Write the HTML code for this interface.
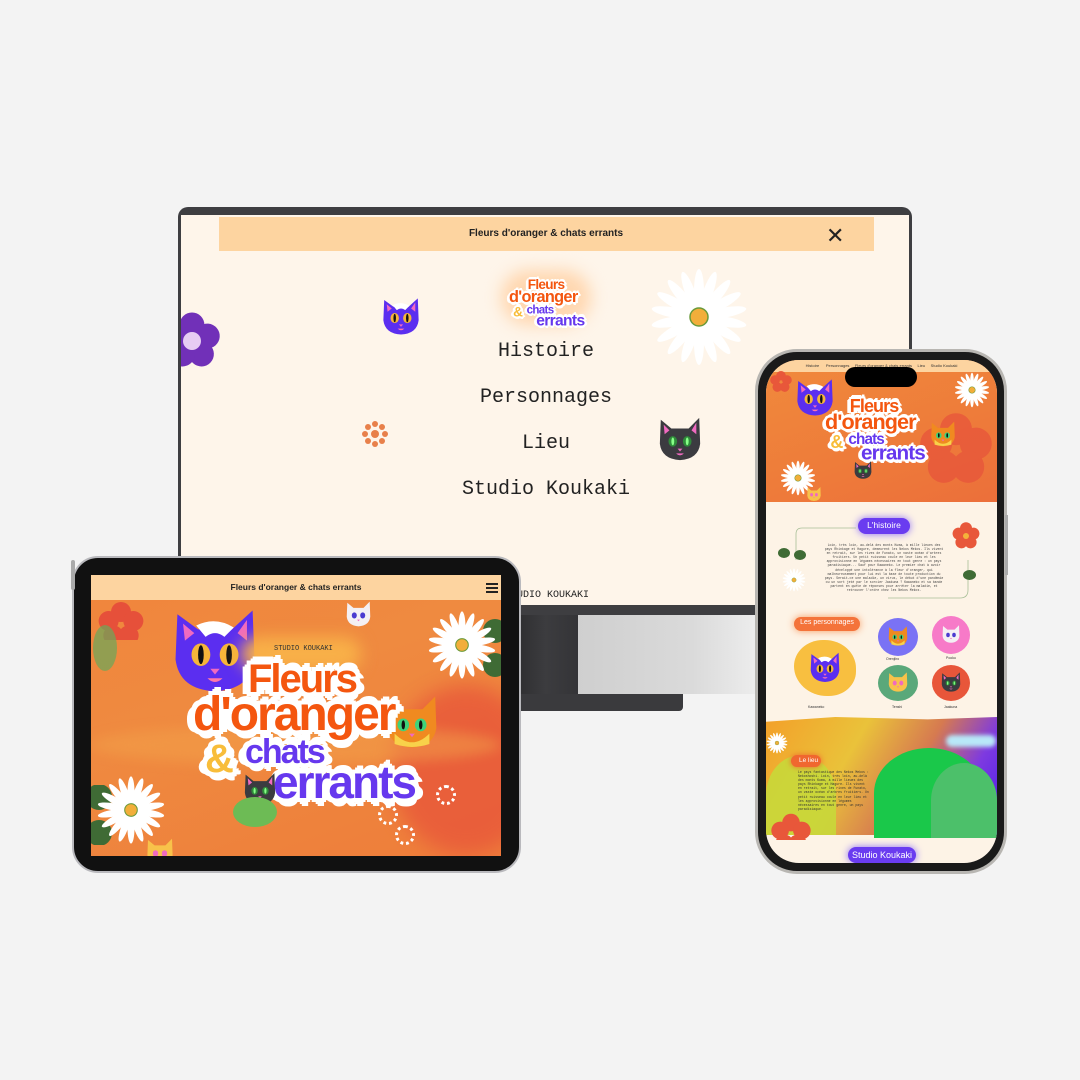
<!DOCTYPE html>
<html><head><meta charset="utf-8">
<style>
*{margin:0;padding:0;box-sizing:border-box}
body{width:1080px;height:1080px;background:#f3f3f3;position:relative;overflow:hidden;font-family:"Liberation Sans",sans-serif}
.a{position:absolute}
.mono{font-family:"Liberation Mono",monospace}
.logo{position:absolute;width:240px;height:150px;transform-origin:0 0}
.logo span{position:absolute;font-weight:bold;letter-spacing:-2px;white-space:nowrap;line-height:1;
text-shadow:6px 0 0 #fff,-6px 0 0 #fff,0 6px 0 #fff,0 -6px 0 #fff,4px 4px 0 #fff,-4px 4px 0 #fff,4px -4px 0 #fff,-4px -4px 0 #fff,8px 2px 0 #fff,-8px 2px 0 #fff,2px 8px 0 #fff,2px -8px 0 #fff}
.o{color:#f4560f}.p{color:#6638ee}.y{color:#f8bd3a}
</style></head><body>
<svg width="0" height="0" style="position:absolute">
<defs>
<symbol id="daisy" viewBox="-50 -50 100 100">
<g fill="#fff">
<ellipse rx="5" ry="22" cy="-26"/><ellipse rx="5" ry="22" cy="-26" transform="rotate(20)"/><ellipse rx="5" ry="22" cy="-26" transform="rotate(40)"/><ellipse rx="5" ry="22" cy="-26" transform="rotate(60)"/><ellipse rx="5" ry="22" cy="-26" transform="rotate(80)"/><ellipse rx="5" ry="22" cy="-26" transform="rotate(100)"/><ellipse rx="5" ry="22" cy="-26" transform="rotate(120)"/><ellipse rx="5" ry="22" cy="-26" transform="rotate(140)"/><ellipse rx="5" ry="22" cy="-26" transform="rotate(160)"/><ellipse rx="5" ry="22" cy="-26" transform="rotate(180)"/><ellipse rx="5" ry="22" cy="-26" transform="rotate(200)"/><ellipse rx="5" ry="22" cy="-26" transform="rotate(220)"/><ellipse rx="5" ry="22" cy="-26" transform="rotate(240)"/><ellipse rx="5" ry="22" cy="-26" transform="rotate(260)"/><ellipse rx="5" ry="22" cy="-26" transform="rotate(280)"/><ellipse rx="5" ry="22" cy="-26" transform="rotate(300)"/><ellipse rx="5" ry="22" cy="-26" transform="rotate(320)"/><ellipse rx="5" ry="22" cy="-26" transform="rotate(340)"/>
</g>
<circle r="9" fill="#f2ae3a" stroke="#6a9a3a" stroke-width="1.5"/>
</symbol>
<symbol id="catp" viewBox="0 0 100 100">
<path d="M10 12 L32 28 L68 28 L90 8 L92 60 Q88 92 50 94 Q12 92 8 60 Z" fill="#5b2ef0"/>
<path d="M16 22 L28 32 L18 40Z M84 18 L74 32 L84 40Z" fill="#f06ac0"/>
<path d="M30 24 Q50 14 70 26 L60 36 Q50 28 40 36Z" fill="#fff"/>
<ellipse cx="35" cy="55" rx="10" ry="12" fill="#f6b53a"/><ellipse cx="65" cy="55" rx="10" ry="12" fill="#f6b53a"/>
<ellipse cx="35" cy="55" rx="3" ry="10" fill="#111"/><ellipse cx="65" cy="55" rx="3" ry="10" fill="#111"/>
<path d="M45 70 L55 70 L50 76Z" fill="#f06ac0"/><path d="M42 80 Q50 88 58 80Z" fill="#f7a"/>
</symbol>
<symbol id="catd" viewBox="0 0 100 100">
<path d="M10 10 L32 28 L68 28 L90 6 L92 60 Q88 92 50 94 Q12 92 8 60 Z" fill="#3b3b40"/>
<path d="M16 20 L28 32 L18 40Z M84 16 L74 32 L84 40Z" fill="#f06ac0"/>
<ellipse cx="35" cy="55" rx="9" ry="11" fill="#2f8a3a"/><ellipse cx="65" cy="55" rx="9" ry="11" fill="#2f8a3a"/>
<ellipse cx="35" cy="55" rx="3" ry="8" fill="#8f8"/><ellipse cx="65" cy="55" rx="3" ry="8" fill="#8f8"/>
<path d="M45 70 L55 70 L50 76Z" fill="#f06ac0"/><path d="M42 80 Q50 88 58 80Z" fill="#f06ac0"/>
</symbol>
<symbol id="cato" viewBox="0 0 100 100">
<path d="M10 10 L32 28 L68 28 L90 6 L92 60 Q88 92 50 94 Q12 92 8 60 Z" fill="#f08a20"/>
<path d="M20 70 Q50 100 80 70 L80 88 Q50 98 20 88Z" fill="#f8d24a"/>
<ellipse cx="35" cy="55" rx="10" ry="11" fill="#3fd27a"/><ellipse cx="65" cy="55" rx="10" ry="11" fill="#3fd27a"/>
<ellipse cx="35" cy="55" rx="3" ry="8" fill="#111"/><ellipse cx="65" cy="55" rx="3" ry="8" fill="#111"/>
<path d="M45 70 L55 70 L50 76Z" fill="#f06ac0"/>
</symbol>
<symbol id="catw" viewBox="0 0 100 100">
<path d="M10 10 L32 28 L68 28 L90 6 L92 60 Q88 92 50 94 Q12 92 8 60 Z" fill="#f4f0f4"/>
<ellipse cx="35" cy="55" rx="9" ry="11" fill="#4b3bd0"/><ellipse cx="65" cy="55" rx="9" ry="11" fill="#4b3bd0"/>
<path d="M45 70 L55 70 L50 76Z" fill="#f06ac0"/>
</symbol>
<symbol id="caty" viewBox="0 0 100 100">
<path d="M10 10 L32 28 L68 28 L90 6 L92 60 Q88 92 50 94 Q12 92 8 60 Z" fill="#f8c24a"/>
<ellipse cx="35" cy="55" rx="9" ry="11" fill="#f06ac0"/><ellipse cx="65" cy="55" rx="9" ry="11" fill="#f06ac0"/>
<path d="M45 70 L55 70 L50 76Z" fill="#f06ac0"/>
</symbol>
<symbol id="flower" viewBox="-50 -50 100 100">
<g><circle cy="-26" r="20"/><circle cy="-26" r="20" transform="rotate(72)"/><circle cy="-26" r="20" transform="rotate(144)"/><circle cy="-26" r="20" transform="rotate(216)"/><circle cy="-26" r="20" transform="rotate(288)"/></g>
</symbol>
</defs></svg>

<!-- MONITOR -->
<div class="a" style="left:578px;top:612px;width:190px;height:82px;background:linear-gradient(90deg,#cfcfcf,#dadada 60%,#f0f0f0)"></div>
<div class="a" style="left:513px;top:606px;width:65px;height:95px;background:linear-gradient(90deg,#2c2c2e,#3c3c3f 50%,#343437)"></div>
<div class="a" style="left:513px;top:694px;width:170px;height:17px;background:#3a3a3d;border-radius:0 0 4px 4px"></div>
<div class="a" style="left:178px;top:207px;width:734px;height:408px;background:#3e3e41;border-radius:10px 10px 0 0"></div>
<div class="a" style="left:181px;top:215px;width:728px;height:390px;background:#fef5ea;overflow:hidden">
  <div class="a" style="left:38px;top:2px;width:655px;height:34px;background:#fdd4a0"></div>
  <div class="a" style="left:0;top:13px;width:730px;text-align:center;font-size:10px;font-weight:bold;color:#222">Fleurs d'oranger &amp; chats errants</div>
  <div class="a" style="left:645px;top:12px;font-size:22px;line-height:18px;color:#222">&#x2715;</div>
  <svg class="a" style="left:-20px;top:88px" width="62" height="76"><use href="#flower" x="0" y="0" width="62" height="76" fill="#7130b8"/><circle cx="31" cy="38" r="9" fill="#e7ccf3"/></svg>
  <svg class="a" style="left:468px;top:52px" width="100" height="100"><use href="#daisy" width="100" height="100"/></svg>
  <svg class="a" style="left:196px;top:80px" width="48" height="42"><use href="#catp" width="48" height="42"/></svg>
  <svg class="a" style="left:472px;top:200px" width="54" height="48"><use href="#catd" width="54" height="48"/></svg>
  <svg class="a" style="left:177px;top:202px" width="34" height="34"><g fill="#e8804a"><circle cx="17" cy="17" r="4"/><circle cx="17" cy="7" r="3"/><circle cx="17" cy="27" r="3"/><circle cx="7" cy="17" r="3"/><circle cx="27" cy="17" r="3"/><circle cx="10" cy="10" r="3"/><circle cx="24" cy="10" r="3"/><circle cx="10" cy="24" r="3"/><circle cx="24" cy="24" r="3"/></g></svg>
  <div class="mono a" style="left:0;width:730px;top:114px;text-align:center;font-size:20px;line-height:46px;color:#222">Histoire<br>Personnages<br>Lieu<br>Studio Koukaki</div>
  <div class="mono a" style="left:336px;top:375px;font-size:10px;color:#222">UDIO KOUKAKI</div>
  <div class="a" style="left:320px;top:55px;width:90px;height:55px;border-radius:40px;background:#ffd7b0;filter:blur(8px)"></div>
  <div class="logo" style="left:328px;top:63px;transform:scale(.34)">
    <span class="o" style="left:55px;top:0;font-size:40px">Fleurs</span>
    <span class="o" style="left:0;top:32px;font-size:48px">d'oranger</span>
    <span class="y" style="left:12px;top:80px;font-size:40px">&amp;</span>
    <span class="p" style="left:52px;top:76px;font-size:34px">chats</span>
    <span class="p" style="left:80px;top:100px;font-size:46px">errants</span>
  </div>
</div>

<!-- TABLET -->
<div class="a" style="left:72px;top:556px;width:449px;height:317px;background:#111;border-radius:26px;border:2px solid #b9b9bd"></div>
<div class="a" style="left:71px;top:560px;width:4px;height:30px;background:#aaa;border-radius:2px"></div>
<div class="a" style="left:91px;top:575px;width:410px;height:281px;overflow:hidden;background:linear-gradient(160deg,#f0853c,#ef8a40 40%,#ee7d3a)">
  <div class="a" style="left:0;top:0;width:410px;height:25px;background:#fdd4a0;z-index:3"></div>
  <div class="a" style="left:0;top:7px;width:410px;text-align:center;font-size:8.5px;font-weight:bold;color:#222;z-index:4">Fleurs d'oranger &amp; chats errants</div>
  <div class="a" style="left:395px;top:8px;width:12px;height:2px;background:#222;box-shadow:0 4px 0 #222,0 8px 0 #222;z-index:4"></div>
  <div class="a" style="left:300px;top:110px;width:150px;height:170px;border-radius:50%;background:#e8573a;filter:blur(10px);opacity:.8"></div>
  <div class="a" style="left:0;top:150px;width:410px;height:40px;background:#f3a24a;opacity:.5;border-radius:50%;filter:blur(6px)"></div>
  <svg class="a" style="left:0;top:25px" width="60" height="40"><use href="#flower" width="60" height="50" fill="#e6503a"/></svg>
  <div class="a" style="left:2px;top:50px;width:24px;height:46px;border-radius:50%;background:#6aa85a;opacity:.7"></div>
  <svg class="a" style="left:70px;top:28px" width="108" height="94"><use href="#catp" width="108" height="94"/></svg>
  <svg class="a" style="left:250px;top:25px" width="35" height="28"><use href="#catw" width="35" height="28"/></svg>
  <div class="a" style="left:150px;top:62px;width:120px;height:34px;background:#f8b048;border-radius:20px;filter:blur(8px)"></div>
  <div class="mono a" style="left:183px;top:70px;font-size:7px;color:#333">STUDIO KOUKAKI</div>
  <svg class="a" style="left:384px;top:44px" width="30" height="60"><circle cx="20" cy="12" r="12" fill="#3f6b35"/><circle cx="20" cy="46" r="12" fill="#3f6b35"/></svg>
  <svg class="a" style="left:336px;top:35px" width="70" height="70"><use href="#daisy" width="70" height="70"/></svg>
  <svg class="a" style="left:286px;top:118px" width="70" height="58"><use href="#cato" width="70" height="58"/></svg>
  <div class="logo" style="left:102px;top:84px;transform:scale(1)">
    <span class="o" style="left:55px;top:0;font-size:40px">Fleurs</span>
    <span class="o" style="left:0;top:32px;font-size:48px">d'oranger</span>
    <span class="y" style="left:12px;top:80px;font-size:40px">&amp;</span>
    <span class="p" style="left:52px;top:76px;font-size:34px">chats</span>
    <span class="p" style="left:80px;top:100px;font-size:46px">errants</span>
  </div>
  <svg class="a" style="left:148px;top:196px" width="42" height="36"><use href="#catd" width="42" height="36"/></svg>
  <div class="a" style="left:142px;top:222px;width:44px;height:30px;border-radius:50%;background:#6dbb55"></div>
  <svg class="a" style="left:0;top:210px" width="30" height="60"><circle cx="8" cy="12" r="13" fill="#3f6b35"/><circle cx="8" cy="48" r="13" fill="#3f6b35"/></svg>
  <svg class="a" style="left:5px;top:200px" width="70" height="70"><use href="#daisy" width="70" height="70"/></svg>
  <svg class="a" style="left:50px;top:262px" width="38" height="30"><use href="#caty" width="38" height="30"/></svg>
  <div class="a" style="left:345px;top:210px;width:20px;height:20px;border-radius:50%;border:3px dotted #fff"></div>
  <div class="a" style="left:287px;top:230px;width:20px;height:20px;border-radius:50%;border:3px dotted #fff"></div>
  <div class="a" style="left:304px;top:250px;width:20px;height:20px;border-radius:50%;border:3px dotted #fff"></div>
</div>

<!-- PHONE -->
<div class="a" style="left:755px;top:349px;width:252px;height:525px;border-radius:42px;background:#1a1a1a;border:3px solid #b8b6b2"></div>
<div class="a" style="left:1005px;top:515px;width:3px;height:60px;background:#aaa"></div>
<div class="a" style="left:766px;top:360px;width:231px;height:503px;border-radius:33px;overflow:hidden;background:#fdf3e6">
  <div class="a" style="left:0;top:0;width:231px;height:142px;background:linear-gradient(160deg,#f08a3c,#ee7b3a 60%,#ec6f3a)"></div>
  <div class="a" style="left:0;top:0;width:231px;height:12px;background:#fdd4a0"></div>
  <div class="a" style="left:0;top:3px;width:231px;text-align:center;font-size:4px;color:#333">Histoire &nbsp;&nbsp;&nbsp;&nbsp; Personnages &nbsp;&nbsp;&nbsp; Fleurs d'oranger &amp; chats errants &nbsp;&nbsp;&nbsp; Lieu &nbsp;&nbsp;&nbsp; Studio Koukaki</div>
  <div class="a" style="left:79px;top:7px;width:72px;height:20px;border-radius:10px;background:#000"></div>
  <svg class="a" style="left:150px;top:40px" width="80" height="100"><use href="#flower" width="80" height="100" fill="#e8573a" opacity=".8"/></svg>
  <svg class="a" style="left:0;top:10px" width="30" height="24"><use href="#flower" width="30" height="24" fill="#e8573a"/></svg>
  <svg class="a" style="left:25px;top:16px" width="48" height="42"><use href="#catp" width="48" height="42"/></svg>
  <svg class="a" style="left:188px;top:12px" width="36" height="36"><use href="#daisy" width="36" height="36"/></svg>
  <svg class="a" style="left:160px;top:60px" width="34" height="28"><use href="#cato" width="34" height="28"/></svg>
  <div class="logo" style="left:59px;top:37px;transform:scale(.45)">
    <span class="o" style="left:55px;top:0;font-size:40px">Fleurs</span>
    <span class="o" style="left:0;top:32px;font-size:48px">d'oranger</span>
    <span class="y" style="left:12px;top:80px;font-size:40px">&amp;</span>
    <span class="p" style="left:52px;top:76px;font-size:34px">chats</span>
    <span class="p" style="left:80px;top:100px;font-size:46px">errants</span>
  </div>
  <svg class="a" style="left:86px;top:100px" width="22" height="20"><use href="#catd" width="22" height="20"/></svg>
  <svg class="a" style="left:14px;top:100px" width="36" height="36"><use href="#daisy" width="36" height="36"/></svg>
  <svg class="a" style="left:38px;top:126px" width="20" height="16"><use href="#caty" width="20" height="16"/></svg>
  <div class="a" style="left:92px;top:158px;width:52px;height:16px;border-radius:10px;background:#6a3cf0;box-shadow:0 0 8px #8a6cf8"></div>
  <div class="a" style="left:92px;top:160px;width:52px;text-align:center;font-size:8.5px;color:#fff">L'histoire</div>
  <svg class="a" style="left:12px;top:160px" width="215" height="90" fill="none" stroke="#a8bf98" stroke-width=".8"><path d="M78 8 H24 Q18 8 18 14 V40"/><path d="M190 40 V70 Q190 78 182 78 H110"/></svg>
  <div class="a" style="left:12px;top:188px;width:12px;height:10px;border-radius:50%;background:#3f6b35"></div>
  <div class="a" style="left:28px;top:190px;width:12px;height:10px;border-radius:50%;background:#3f6b35"></div>
  <svg class="a" style="left:16px;top:208px" width="24" height="24"><use href="#daisy" width="24" height="24"/></svg>
  <svg class="a" style="left:185px;top:160px" width="30" height="32"><use href="#flower" width="30" height="32" fill="#e8573a"/><circle cx="15" cy="16" r="3" fill="#f4b23a"/></svg>
  <div class="a" style="left:197px;top:210px;width:13px;height:10px;border-radius:50%;background:#3f6b35"></div>
  <div class="mono a" style="left:58px;top:183px;width:120px;font-size:3.2px;line-height:4.1px;color:#444;text-align:center">Loin, très loin, au-delà des monts Kuma, à mille lieues des pays Rhinkage et Hagure, demeurent les Nekos Mekos. Ils vivent en retrait, sur les rives de Funato, un vaste océan d'arbres fruitiers. Un petit ruisseau coule en leur lieu et les approvisionne en légumes nécessaires en tout genre : un pays paradisiaque... Sauf pour Kawaneko. Le premier chat à avoir développé une intolérance à la fleur d'oranger, qui malheureusement pour lui est la base de toute production du pays. Serait-ce une maladie, un virus, le début d'une pandémie ou un sort jeté par le sorcier Jaakuna ? Kawaneko et sa bande partent en quête de réponses pour arrêter la maladie, et retrouver l'ordre chez les Nekos Mekos.</div>
  <div class="a" style="left:28px;top:257px;width:66px;height:14px;border-radius:10px;background:#f4733a;box-shadow:0 0 8px #f79a60"></div>
  <div class="a" style="left:28px;top:259px;width:66px;text-align:center;font-size:7px;color:#fff">Les personnages</div>
  <div class="a" style="left:28px;top:280px;width:62px;height:56px;border-radius:48% 52% 45% 55%;background:#f8bf40"></div>
  <svg class="a" style="left:40px;top:290px" width="38" height="34"><use href="#catp" width="38" height="34"/></svg>
  <div class="a" style="left:112px;top:258px;width:40px;height:38px;border-radius:50%;background:#7a72f5"></div>
  <svg class="a" style="left:120px;top:265px" width="24" height="22"><use href="#cato" width="24" height="22"/></svg>
  <div class="a" style="left:166px;top:256px;width:38px;height:38px;border-radius:50%;background:#f77ac8"></div>
  <svg class="a" style="left:174px;top:264px" width="22" height="20"><use href="#catw" width="22" height="20"/></svg>
  <div class="a" style="left:112px;top:305px;width:40px;height:36px;border-radius:50%;background:#5aa87a"></div>
  <svg class="a" style="left:120px;top:311px" width="24" height="22"><use href="#caty" width="24" height="22"/></svg>
  <div class="a" style="left:166px;top:305px;width:38px;height:36px;border-radius:50%;background:#e8563a"></div>
  <svg class="a" style="left:173px;top:311px" width="24" height="22"><use href="#catd" width="24" height="22"/></svg>
  <div class="a" style="left:42px;top:345px;font-size:3.5px;color:#333">Kawaneko</div>
  <div class="a" style="left:120px;top:297px;font-size:3.5px;color:#333">Orenjiiro</div>
  <div class="a" style="left:180px;top:296px;font-size:3.5px;color:#333">Pooku</div>
  <div class="a" style="left:126px;top:345px;font-size:3.5px;color:#333">Tenshi</div>
  <div class="a" style="left:178px;top:345px;font-size:3.5px;color:#333">Jaakuna</div>
  <div class="a" style="left:0;top:357px;width:231px;height:118px;background:linear-gradient(120deg,#f3a02a 0%,#eac23a 35%,#d67a50 60%,#7e3ae0 80%,#4a1de8);clip-path:polygon(0 4%,30% 0,70% 2%,100% 0,100% 100%,0 100%)"></div>
  <div class="a" style="left:0;top:395px;width:70px;height:80px;background:#c8d83a;border-radius:50% 50% 0 0;opacity:.9"></div>
  <div class="a" style="left:180px;top:375px;width:50px;height:12px;border-radius:8px;background:#b8e8f8;filter:blur(2px)"></div>
  <div class="a" style="left:108px;top:388px;width:110px;height:90px;border-radius:50% 50% 0 0;background:#1ac84a"></div>
  <div class="a" style="left:165px;top:403px;width:66px;height:75px;border-radius:50% 50% 0 0;background:#4cc06a"></div>
  <div class="a" style="left:25px;top:395px;width:30px;height:12px;border-radius:8px;background:#f0672f;box-shadow:0 0 6px #f0672f"></div>
  <div class="a" style="left:33px;top:397px;font-size:6.5px;color:#fff">Le lieu</div>
  <div class="mono a" style="left:32px;top:410px;width:72px;font-size:3.2px;line-height:4.1px;color:#333">Le pays fantastique des Nekos Mekos : Nekoshoshi. Loin, très loin, au-delà des monts Kuma, à mille lieues des pays Rhinkage et Hagure. Ils vivent en retrait, sur les rives de Funato, un vaste océan d'arbres fruitiers. Un petit ruisseau coule en leur lieu et les approvisionne en légumes nécessaires en tout genre, un pays paradisiaque.</div>
  <svg class="a" style="left:0;top:452px" width="50" height="28"><use href="#flower" width="50" height="44" fill="#e8573a"/></svg>
  <svg class="a" style="left:0;top:372px" width="22" height="22"><use href="#daisy" width="22" height="22"/></svg>
  <div class="a" style="left:82px;top:487px;width:68px;height:16px;border-radius:10px;background:#6a3cf0;box-shadow:0 0 8px #8a6cf8"></div>
  <div class="a" style="left:82px;top:490px;width:68px;text-align:center;font-size:9px;color:#fff">Studio Koukaki</div>
</div>
</body></html>
